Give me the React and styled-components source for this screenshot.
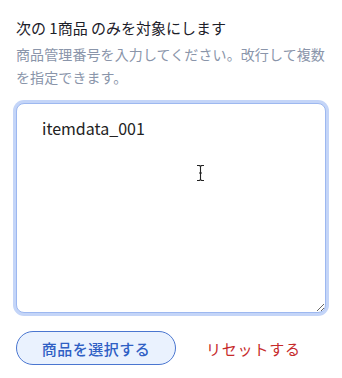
import React from "react";
import styled, { createGlobalStyle } from "styled-components";

const GlobalStyle = createGlobalStyle`
  html, body {
    margin: 0;
    padding: 0;
    background: #ffffff;
    font-family: "Noto Sans CJK JP", "Noto Sans", sans-serif;
  }
`;

const Panel = styled.div`
  padding: 17px 13px 0 16px;
  display: flex;
  flex-direction: column;
`;

const Title = styled.div`
  font-size: 15px;
  line-height: 22px;
  color: #1c2029;
  font-weight: 400;
`;

const Hint = styled.div`
  margin-top: 4px;
  font-size: 14px;
  line-height: 23px;
  color: #8a95aa;
  letter-spacing: 0.1px;
`;

const Field = styled.div`
  position: relative;
  margin-top: 14px;
`;

const Area = styled.textarea`
  display: block;
  box-sizing: border-box;
  width: 310px;
  height: 210px;
  padding: 12px 25px;
  border: 1px solid #9db8f0;
  border-radius: 8px;
  box-shadow: 0 0 0 3px #c4d5f8;
  outline: none;
  resize: vertical;
  font-family: "Noto Sans CJK JP", "Noto Sans", sans-serif;
  font-size: 16px;
  line-height: 24px;
  color: #222;
`;

const Caret = styled.svg`
  position: absolute;
  left: 180px;
  top: 61px;
  pointer-events: none;
`;

const Actions = styled.div`
  display: flex;
  align-items: center;
  gap: 30px;
  margin-top: 18px;
`;

const Pill = styled.button`
  width: 160px;
  height: 34px;
  border-radius: 17px;
  border: 1px solid #4a76d0;
  background: #eaf2fe;
  color: #2f5fc4;
  font-family: "Noto Sans CJK JP", "Noto Sans", sans-serif;
  font-size: 15px;
  font-weight: 500;
  letter-spacing: 0.5px;
  cursor: pointer;
`;

const Reset = styled.button`
  border: none;
  background: none;
  padding: 0;
  color: #c62a2a;
  font-family: "Noto Sans CJK JP", "Noto Sans", sans-serif;
  font-size: 15px;
  letter-spacing: 0.8px;
  cursor: pointer;
`;

const App = () => {
  return (
    <>
      <GlobalStyle />
      <Panel>
        <Title>次の 1商品 のみを対象にします</Title>
        <Hint>
          商品管理番号を入力してください。改行して複数
          <br />
          を指定できます。
        </Hint>
        <Field>
          <Area defaultValue="itemdata_001" />
          <Caret width="9" height="18" viewBox="0 0 9 18">
            <path
              d="M1 1.5h2.5l1 1 1-1H8M1 16.5h2.5l1-1 1 1H8M4.5 2.5v13M3 9h3"
              fill="none"
              stroke="#222"
              strokeWidth="1.1"
            />
          </Caret>
        </Field>
        <Actions>
          <Pill>商品を選択する</Pill>
          <Reset>リセットする</Reset>
        </Actions>
      </Panel>
    </>
  );
};

export default App;
